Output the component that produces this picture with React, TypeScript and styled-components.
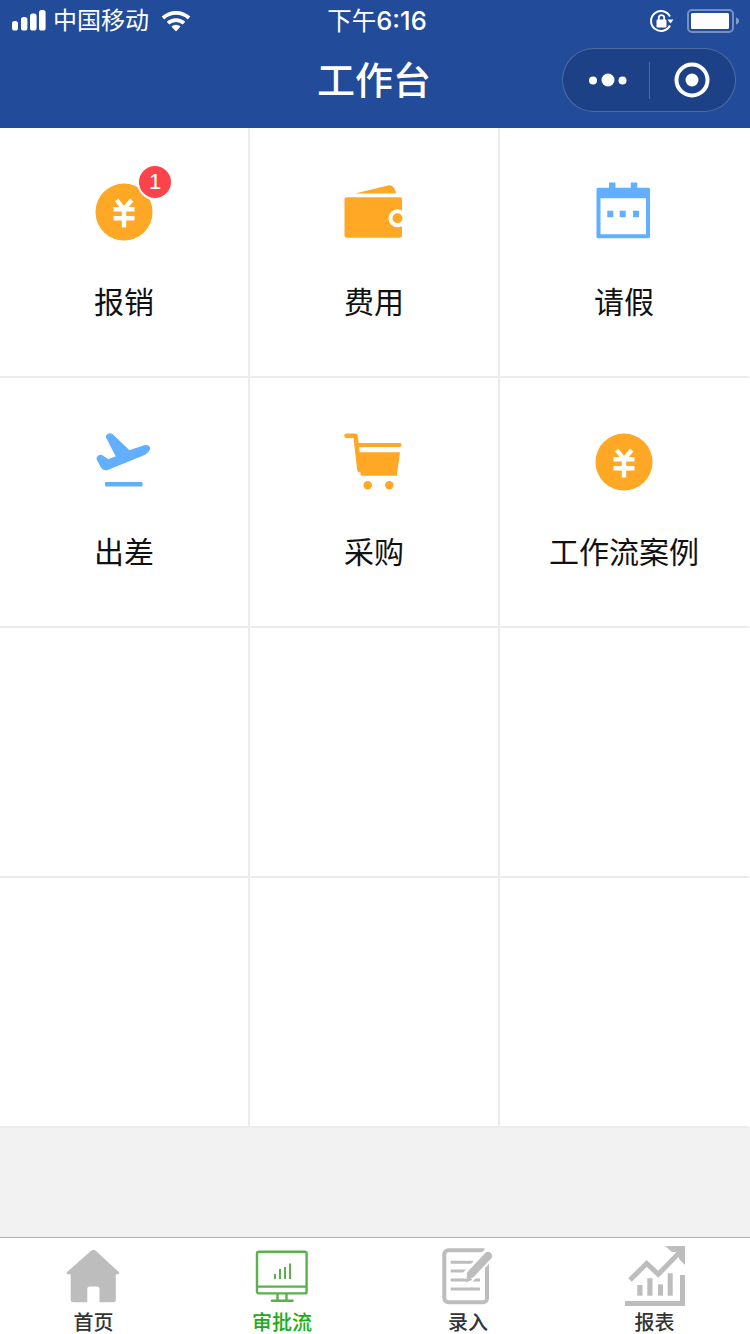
import React from 'react'
import styled, { createGlobalStyle } from 'styled-components'

const ORANGE = '#ffa826'
const BLUE = '#62afff'
const TAB_GREY = '#bdbdbd'
const TAB_GREEN = '#58b14b'

const GlobalStyle = createGlobalStyle`
  html, body {
    margin: 0;
    padding: 0;
    background: #fff;
  }
  * {
    box-sizing: border-box;
  }
`

const Page = styled.div`
  width: 750px;
  height: 1334px;
  display: flex;
  flex-direction: column;
  overflow: hidden;
  background: #f2f2f2;
  font-family: "Noto Sans CJK SC", "Noto Sans", sans-serif;
`

const Header = styled.header`
  flex: none;
  height: 128px;
  background: #224b9a;
  color: #fff;
`

const StatusBar = styled.div`
  height: 40px;
  display: grid;
  grid-template-columns: 1fr auto 1fr;
  align-items: center;
  padding: 0 10px 0 12px;
`

const StatusLeft = styled.div`
  display: flex;
  align-items: center;
  gap: 7px;
`

const StatusRight = styled.div`
  display: flex;
  align-items: center;
  justify-content: flex-end;
  gap: 13px;
`

const Carrier = styled.span`
  font-size: 24px;
  line-height: 36px;
  margin: 0 5px 4px 0;
`

const Clock = styled.span`
  font-size: 24.5px;
  line-height: 40px;
  padding-left: 2px;
`

const ClockDigits = styled.span`
  font-family: Inter, "Liberation Sans", sans-serif;
  font-size: 25.5px;
  font-weight: 500;
`

const NavBar = styled.div`
  height: 80px;
  display: grid;
  grid-template-columns: 1fr auto 1fr;
  align-items: center;
  padding: 0 14px;
`

const Title = styled.h1`
  grid-column: 2;
  margin: 0 2px 4px 0;
  font-size: 38px;
  line-height: 52px;
  font-weight: 500;
`

const Capsule = styled.div`
  justify-self: end;
  width: 174px;
  height: 64px;
  display: flex;
  align-items: center;
  border-radius: 32px;
  border: 1px solid rgba(255, 255, 255, 0.22);
  background: rgba(0, 0, 0, 0.13);
`

const CapsuleSide = styled.div`
  flex: 1;
  display: flex;
  align-items: center;
  justify-content: center;
`

const CapsuleDivider = styled.div`
  flex: none;
  width: 1px;
  height: 37px;
  background: rgba(255, 255, 255, 0.22);
`

const Grid = styled.main`
  flex: none;
  display: grid;
  grid-template-columns: repeat(3, 250px);
  grid-auto-rows: 250px;
  background: #fff;
`

const Cell = styled.div`
  display: flex;
  flex-direction: column;
  align-items: center;
  padding-top: 54px;
  border-right: 2px solid #ececec;
  border-bottom: 2px solid #ececec;

  &:nth-child(3n) {
    border-right-color: transparent;
  }
`

const IconWrap = styled.div`
  position: relative;
  width: 60px;
  height: 60px;
`

const Badge = styled.span`
  position: absolute;
  top: -18px;
  left: 43px;
  width: 36px;
  height: 36px;
  border: 2px solid #fff;
  border-radius: 50%;
  background: #fb4449;
  color: #fff;
  font-family: "Liberation Sans", Arial, sans-serif;
  font-size: 22px;
  line-height: 32px;
  text-align: center;
`

const Label = styled.div`
  margin-top: 38px;
  font-size: 30px;
  line-height: 40px;
  color: #111;
`

const Spacer = styled.div`
  flex: 1;
`

const TabBar = styled.nav`
  flex: none;
  height: 97px;
  display: grid;
  grid-template-columns: 187px 190px 182px 191px;
  background: #fff;
  border-top: 1px solid #b2b2b2;
`

const Tab = styled.div`
  display: flex;
  flex-direction: column;
  align-items: center;
  padding-top: 8px;
`

const TabLabel = styled.span<{ $active?: boolean }>`
  margin-top: 6px;
  font-family: "Liberation Sans", "Noto Sans CJK SC", sans-serif;
  font-size: 20px;
  line-height: 22px;
  font-weight: 500;
  color: ${({ $active }) => ($active ? '#1aad19' : '#333')};
`

const Svg = styled.svg`
  display: block;
  flex: none;
`

const SignalIcon = () => (
  <Svg width="34" height="22" viewBox="0 0 34 22" fill="#fff">
    <rect x="0" y="11" width="6" height="9.5" rx="2.6" />
    <rect x="9" y="7" width="6.4" height="13.5" rx="2.6" />
    <rect x="18" y="3.5" width="6.6" height="17" rx="2.6" />
    <rect x="27" y="0" width="6.6" height="20.5" rx="2.6" />
  </Svg>
)

const WifiIcon = () => (
  <Svg width="30" height="22" viewBox="0 0 30 22" fill="none" stroke="#fff" strokeWidth="3.8">
    <path d="M2 8a19 19 0 0 1 26 0" />
    <path d="M7 13.2a12 12 0 0 1 16 0" />
    <path d="M15 21.5l-4.6-4.9a6.4 6.4 0 0 1 9.2 0z" fill="#fff" stroke="none" />
  </Svg>
)

const RotationLockIcon = () => (
  <Svg width="24" height="24" viewBox="0 0 24 24" fill="none">
    <path d="M20 7.5A10 10 0 1 0 20 16.5" stroke="#fff" strokeWidth="2" />
    <path d="M17.5 10.5h6l-3 4z" fill="#fff" />
    <rect x="6.5" y="10.5" width="10" height="8" rx="1.2" fill="#fff" />
    <path d="M8.8 11V8.8a2.7 2.7 0 0 1 5.4 0V11" stroke="#fff" strokeWidth="1.8" />
  </Svg>
)

const BatteryIcon = () => (
  <Svg width="53" height="24" viewBox="0 0 53 24">
    <rect x="1" y="1" width="45" height="22" rx="4" fill="none" stroke="#fff" strokeOpacity="0.38" strokeWidth="2" />
    <rect x="4" y="4" width="38" height="16" rx="1.5" fill="#fff" />
    <path d="M49 8.5c2 .6 3 1.8 3 3.5s-1 2.9-3 3.5z" fill="#fff" fillOpacity="0.45" />
  </Svg>
)

const MoreIcon = () => (
  <Svg width="46" height="14" viewBox="0 0 46 14" fill="#fff">
    <circle cx="10" cy="7.5" r="4" />
    <circle cx="25" cy="7" r="6.5" />
    <circle cx="39.5" cy="7.5" r="4" />
  </Svg>
)

const CloseIcon = () => (
  <Svg width="36" height="36" viewBox="0 0 36 36">
    <circle cx="18" cy="18" r="15.5" fill="none" stroke="#fff" strokeWidth="4" />
    <circle cx="18" cy="18" r="6.5" fill="#fff" />
  </Svg>
)

const CoinIcon = () => (
  <Svg width="60" height="60" viewBox="0 0 60 60">
    <circle cx="30" cy="30" r="28.5" fill={ORANGE} />
    <path
      d="M22.7 18L30 27.3L37.7 18M19.5 27.3H40.5M19.5 36.3H40.5M30 27.3V45.5"
      fill="none"
      stroke="#fff"
      strokeWidth="4.4"
    />
  </Svg>
)

const WalletIcon = () => (
  <Svg width="60" height="60" viewBox="0 0 60 60">
    <path d="M11 11.5L45 3.2c3.5-.6 6.5 3.5 7 8.3z" fill={ORANGE} />
    <rect x="0.5" y="15.3" width="57.5" height="40.5" rx="2" fill={ORANGE} />
    <circle cx="53.5" cy="36.3" r="9" fill="#fff" />
    <circle cx="53.5" cy="36.3" r="5" fill={ORANGE} />
  </Svg>
)

const CalendarIcon = () => (
  <Svg width="60" height="60" viewBox="0 0 60 60" fill={BLUE}>
    <rect x="15" y="0.5" width="6.5" height="7" />
    <rect x="36.8" y="0.5" width="6.5" height="7" />
    <path
      fillRule="evenodd"
      d="M4 5.7H54.5a1.5 1.5 0 0 1 1.5 1.5V54.8a1.5 1.5 0 0 1-1.5 1.5H4a1.5 1.5 0 0 1-1.5-1.5V7.2A1.5 1.5 0 0 1 4 5.7zM6.5 16.3V52.3H52V16.3z"
    />
    <rect x="13.3" y="28.7" width="6" height="6.5" />
    <rect x="25.7" y="28.7" width="6" height="6.5" />
    <rect x="39" y="28.7" width="6" height="6.5" />
  </Svg>
)

const PlaneIcon = () => (
  <Svg width="60" height="60" viewBox="0 0 60 60" fill={BLUE}>
    <path
      d="M12.8 5.5C12 3 15.5 1.2 18 2.6L35.3 19L50.5 13.9c3-.9 5.5 1 4.8 3.2c-.5 2-2.2 3.4-4.3 4.9L14 37c-2.6 .9-5.2 .1-6.4-1.8L3.4 27.3c-1-2.4 2.2-4.6 4.6-3.4l6.3 4.1l8.4-3.4z"
      stroke={BLUE}
      strokeWidth="1.4"
      strokeLinejoin="round"
    />
    <rect x="11" y="50" width="37.5" height="4.6" rx="1" />
  </Svg>
)

const CartIcon = () => (
  <Svg width="60" height="60" viewBox="0 0 60 60" fill={ORANGE}>
    <path d="M2.5 3.7H11.5L15.5 38" fill="none" stroke={ORANGE} strokeWidth="4.6" strokeLinecap="round" strokeLinejoin="round" />
    <path d="M14.5 13H55.5" fill="none" stroke={ORANGE} strokeWidth="4.2" strokeLinecap="round" />
    <path d="M15.5 20.3H56L52.8 43.8H17.5a1 1 0 0 1-1-1z" />
    <circle cx="23.7" cy="53.3" r="4.2" />
    <circle cx="45.3" cy="53.3" r="4.2" />
  </Svg>
)

const HomeIcon = () => (
  <Svg width="60" height="60" viewBox="0 0 60 60" fill={TAB_GREY}>
    <path d="M27.4 4.6a3 3 0 0 1 4 0L54.8 26a1.3 1.3 0 0 1-.9 2.3H51.8V53.8a2.5 2.5 0 0 1-2.5 2.5H35.5V43a2.5 2.5 0 0 0-2.5-2.5H25.8a2.5 2.5 0 0 0-2.5 2.5V56.3H9.2a2.5 2.5 0 0 1-2.5-2.5V28.3H4a1.3 1.3 0 0 1-.9-2.3z" />
  </Svg>
)

const MonitorIcon = () => (
  <Svg width="60" height="60" viewBox="0 0 60 60" fill="none" stroke={TAB_GREEN} strokeWidth="2.4">
    <rect x="5" y="5.8" width="49.6" height="41.6" rx="2" />
    <path d="M5 40.6H54.6" />
    <path d="M25.5 47.5V54.5M34.5 47.5V54.5" />
    <path d="M20 54.8H40.5" strokeWidth="2.6" strokeLinecap="round" />
    <path d="M23 33V28M28 33V23M33 33V21M38 33V17.5" strokeWidth="2" />
  </Svg>
)

const EntryIcon = () => (
  <Svg width="60" height="60" viewBox="0 0 60 60" fill="none" stroke={TAB_GREY}>
    <rect x="6.3" y="4.3" width="42.7" height="52" rx="4" strokeWidth="4" />
    <path d="M12.7 16.3H35M12.7 25H28M12.7 34H42M12.7 43H42" strokeWidth="3" />
    <path d="M54 5L28 33" stroke="#fff" strokeWidth="13" />
    <path d="M50 10L33 28" strokeWidth="8" strokeLinecap="round" />
    <path d="M27.5 36l2-7l5 5z" fill={TAB_GREY} stroke="none" />
  </Svg>
)

const ReportIcon = () => (
  <Svg width="60" height="60" viewBox="0 0 60 60" fill={TAB_GREY}>
    <path d="M0 55H55V29H60V60H0z" />
    <rect x="12.3" y="39" width="5.2" height="10.7" />
    <rect x="22.3" y="32.3" width="5.2" height="17.4" />
    <rect x="33" y="38.3" width="5" height="11.4" />
    <rect x="42.7" y="27.3" width="5" height="22.4" />
    <path d="M5 34L21.7 17.5L33.3 28.3L56 5" fill="none" stroke={TAB_GREY} strokeWidth="5" />
    <path d="M40 0H60V19L54 13V6H47z" />
  </Svg>
)

type Item = {
  label: string
  icon?: React.ReactNode
  badge?: number
}

const items: Item[] = [
  { label: '报销', icon: <CoinIcon />, badge: 1 },
  { label: '费用', icon: <WalletIcon /> },
  { label: '请假', icon: <CalendarIcon /> },
  { label: '出差', icon: <PlaneIcon /> },
  { label: '采购', icon: <CartIcon /> },
  { label: '工作流案例', icon: <CoinIcon /> },
  { label: '' },
  { label: '' },
  { label: '' },
  { label: '' },
  { label: '' },
  { label: '' },
]

const tabs = [
  { label: '首页', icon: <HomeIcon /> },
  { label: '审批流', icon: <MonitorIcon />, active: true },
  { label: '录入', icon: <EntryIcon /> },
  { label: '报表', icon: <ReportIcon /> },
]

const App = () => (
  <>
    <GlobalStyle />
    <Page>
      <Header>
        <StatusBar>
          <StatusLeft>
            <SignalIcon />
            <Carrier>中国移动</Carrier>
            <WifiIcon />
          </StatusLeft>
          <Clock>
            下午<ClockDigits>6:16</ClockDigits>
          </Clock>
          <StatusRight>
            <RotationLockIcon />
            <BatteryIcon />
          </StatusRight>
        </StatusBar>
        <NavBar>
          <Title>工作台</Title>
          <Capsule>
            <CapsuleSide>
              <MoreIcon />
            </CapsuleSide>
            <CapsuleDivider />
            <CapsuleSide>
              <CloseIcon />
            </CapsuleSide>
          </Capsule>
        </NavBar>
      </Header>
      <Grid>
        {items.map((item, i) => (
          <Cell key={i}>
            {item.icon && (
              <>
                <IconWrap>
                  {item.icon}
                  {item.badge && <Badge>{item.badge}</Badge>}
                </IconWrap>
                <Label>{item.label}</Label>
              </>
            )}
          </Cell>
        ))}
      </Grid>
      <Spacer />
      <TabBar>
        {tabs.map((tab) => (
          <Tab key={tab.label}>
            {tab.icon}
            <TabLabel $active={tab.active}>{tab.label}</TabLabel>
          </Tab>
        ))}
      </TabBar>
    </Page>
  </>
)

export default App
